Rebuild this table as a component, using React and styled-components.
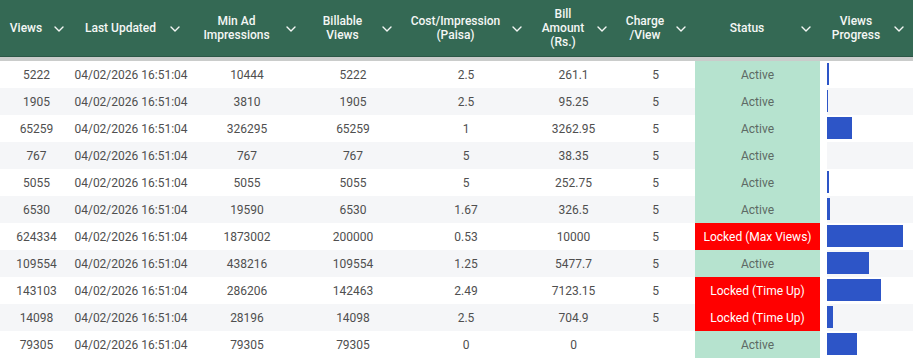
import React from "react";
import styled, { createGlobalStyle } from "styled-components";

const GlobalStyle = createGlobalStyle`
  html, body { margin: 0; padding: 0; background: #ffffff; }
  body { font-family: Roboto, "Noto Sans", Arial, sans-serif; }
`;

const COLS = "73px 116px 116px 96px 130px 85px 79px 125px 1fr";

const Table = styled.div`
  width: 913px;
  height: 358px;
  overflow: hidden;
  font-size: 12px;
`;

const HeaderRow = styled.div`
  display: grid;
  grid-template-columns: ${COLS};
  height: 56px;
  background: #346954;
  border-bottom: 1px solid #2b5746;
`;

const Separator = styled.div`
  height: 4px;
  background: #cacccb;
`;

const HeaderCell = styled.div`
  display: flex;
  align-items: center;
  padding-right: 9px;
  color: #f4f7f5;
  font-weight: 500;
  line-height: 14px;
`;

const HeaderLabel = styled.span`
  flex: 1;
  text-align: center;
`;

const Chevron = styled.svg`
  flex: none;
  width: 10px;
  height: 6px;
  margin-left: 2px;
  margin-top: 1px;
`;

const Row = styled.div`
  display: grid;
  grid-template-columns: ${COLS};
  height: 27px;
  background: ${(p) => (p.$alt ? "#f5f6f8" : "#ffffff")};
`;

const Cell = styled.div`
  display: flex;
  align-items: center;
  justify-content: center;
  color: #4f4f4f;
  white-space: nowrap;
`;

const StatusCell = styled(Cell)`
  background: ${(p) => (p.$locked ? "#ff0000" : "#b6e3cf")};
  color: ${(p) => (p.$locked ? "#ffffff" : "#5d6a64")};
`;

const ProgressCell = styled.div`
  display: flex;
  align-items: flex-start;
  padding: 2px 0 0 7px;
  box-sizing: border-box;
  border-left: 0;
  background: linear-gradient(to right, #ffffff 7px, transparent 7px);
`;

const Bar = styled.div`
  height: 22px;
  background: #2d55c7;
`;

const headers = [
  ["Views"],
  ["Last Updated"],
  ["Min Ad", "Impressions"],
  ["Billable", "Views"],
  ["Cost/Impression", "(Paisa)"],
  ["Bill", "Amount", "(Rs.)"],
  ["Charge", "/View"],
  ["Status"],
  ["Views", "Progress"],
];

const D = "04/02/2026 16:51:04";
const rows = [
  ["5222", D, "10444", "5222", "2.5", "261.1", "5", "Active", 2],
  ["1905", D, "3810", "1905", "2.5", "95.25", "5", "Active", 1],
  ["65259", D, "326295", "65259", "1", "3262.95", "5", "Active", 25],
  ["767", D, "767", "767", "5", "38.35", "5", "Active", 0],
  ["5055", D, "5055", "5055", "5", "252.75", "5", "Active", 2],
  ["6530", D, "19590", "6530", "1.67", "326.5", "5", "Active", 3],
  ["624334", D, "1873002", "200000", "0.53", "10000", "5", "Locked (Max Views)", 76],
  ["109554", D, "438216", "109554", "1.25", "5477.7", "5", "Active", 42],
  ["143103", D, "286206", "142463", "2.49", "7123.15", "5", "Locked (Time Up)", 54],
  ["14098", D, "28196", "14098", "2.5", "704.9", "5", "Locked (Time Up)", 6],
  ["79305", D, "79305", "79305", "0", "0", "", "Active", 30],
];

function ChevronIcon() {
  return (
    <Chevron viewBox="0 0 10 6">
      <path d="M1 1 L5 5 L9 1" fill="none" stroke="#f4f7f5" strokeWidth="1.4" strokeLinecap="round" strokeLinejoin="round" />
    </Chevron>
  );
}

export default function App() {
  return (
    <>
      <GlobalStyle />
      <Table>
        <HeaderRow>
          {headers.map((lines, i) => (
            <HeaderCell key={i}>
              <HeaderLabel>
                {lines.map((l, j) => (
                  <React.Fragment key={j}>
                    {j > 0 && <br />}
                    {l}
                  </React.Fragment>
                ))}
              </HeaderLabel>
              <ChevronIcon />
            </HeaderCell>
          ))}
        </HeaderRow>
        <Separator />
        {rows.map((r, i) => (
          <Row key={i} $alt={i % 2 === 1}>
            {r.slice(0, 7).map((v, j) => (
              <Cell key={j}>{v}</Cell>
            ))}
            <StatusCell $locked={r[7] !== "Active"}>{r[7]}</StatusCell>
            <ProgressCell>
              <Bar style={{ width: `${r[8]}px` }} />
            </ProgressCell>
          </Row>
        ))}
      </Table>
    </>
  );
}
